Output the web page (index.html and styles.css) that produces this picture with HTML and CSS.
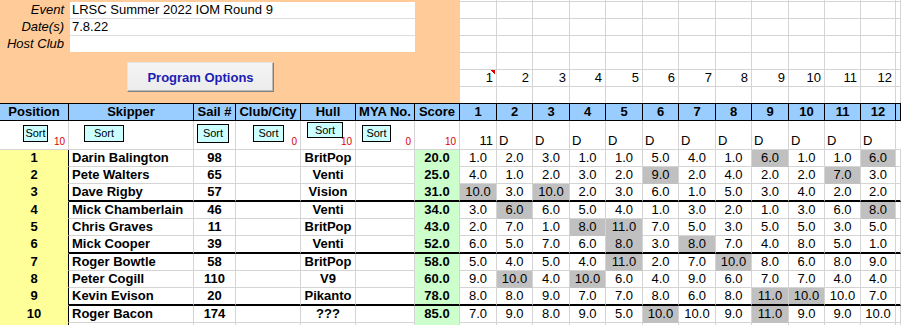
FILE: index.html
```html
<!DOCTYPE html>
<html>
<head>
<meta charset="utf-8">
<title>LRSC Summer 2022 IOM Round 9</title>
<link rel="stylesheet" href="styles.css">
</head>
<body>
<div class="sheet">
  <div class="top">
    <div class="panel">
      <div class="fields">
        <div class="lbl">Event</div><div class="val">LRSC Summer 2022 IOM Round 9</div>
        <div class="lbl">Date(s)</div><div class="val sep">7.8.22</div>
        <div class="lbl">Host Club</div><div class="val sep"></div>
      </div>
      <button class="prog">Program Options</button>
    </div>
    <div class="topgrid">
      <div></div><div></div><div></div><div></div><div></div><div></div><div></div><div></div><div></div><div></div><div></div><div></div><div></div>
      <div></div><div></div><div></div><div></div><div></div><div></div><div></div><div></div><div></div><div></div><div></div><div></div><div></div>
      <div></div><div></div><div></div><div></div><div></div><div></div><div></div><div></div><div></div><div></div><div></div><div></div><div></div>
      <div></div><div></div><div></div><div></div><div></div><div></div><div></div><div></div><div></div><div></div><div></div><div></div><div></div>
      <div></div><div></div><div></div><div></div><div></div><div></div><div></div><div></div><div></div><div></div><div></div><div></div><div></div>
      <div class="n note">1</div><div class="n">2</div><div class="n">3</div><div class="n">4</div><div class="n">5</div><div class="n">6</div><div class="n">7</div><div class="n">8</div><div class="n">9</div><div class="n">10</div><div class="n">11</div><div class="n">12</div><div></div>
      <div></div><div></div><div></div><div></div><div></div><div></div><div></div><div></div><div></div><div></div><div></div><div></div><div></div>
    </div>
  </div>

  <div class="row hdr">
    <div>Position</div><div>Skipper</div><div>Sail #</div><div>Club/City</div><div>Hull</div><div>MYA No.</div><div>Score</div>
    <div>1</div><div>2</div><div>3</div><div>4</div><div>5</div><div>6</div><div>7</div><div>8</div><div>9</div><div>10</div><div>11</div><div>12</div><div></div>
  </div>

  <div class="row srt">
    <div><span class="btn b-pos">Sort</span><span class="red">10</span></div>
    <div><span class="btn b-skip">Sort</span></div>
    <div><span class="btn b-sail">Sort</span></div>
    <div><span class="btn b-club">Sort</span><span class="red">0</span></div>
    <div><span class="btn b-hull">Sort</span><span class="red">10</span></div>
    <div><span class="btn b-mya">Sort</span><span class="red">0</span></div>
    <div><span class="red">10</span></div>
    <div>11</div>
    <div class="dl">D</div><div class="dl">D</div><div class="dl">D</div><div class="dl">D</div><div class="dl">D</div><div class="dl">D</div><div class="dl">D</div><div class="dl">D</div><div class="dl">D</div><div class="dl">D</div><div class="dl">D</div>
    <div></div>
  </div>

  <div class="row">
    <div class="p">1</div><div class="nm">Darin Balington</div><div class="b">98</div><div></div><div class="b">BritPop</div><div></div><div class="sc">20.0</div>
    <div>1.0</div><div>2.0</div><div>3.0</div><div>1.0</div><div>1.0</div><div>5.0</div><div>4.0</div><div>1.0</div><div class="g">6.0</div><div>1.0</div><div>1.0</div><div class="g">6.0</div><div></div>
  </div>
  <div class="row">
    <div class="p">2</div><div class="nm">Pete Walters</div><div class="b">65</div><div></div><div class="b">Venti</div><div></div><div class="sc">25.0</div>
    <div>4.0</div><div>1.0</div><div>2.0</div><div>3.0</div><div>2.0</div><div class="g">9.0</div><div>2.0</div><div>4.0</div><div>2.0</div><div>2.0</div><div class="g">7.0</div><div>3.0</div><div></div>
  </div>
  <div class="row thick">
    <div class="p">3</div><div class="nm">Dave Rigby</div><div class="b">57</div><div></div><div class="b">Vision</div><div></div><div class="sc">31.0</div>
    <div class="g">10.0</div><div>3.0</div><div class="g">10.0</div><div>2.0</div><div>3.0</div><div>6.0</div><div>1.0</div><div>5.0</div><div>3.0</div><div>4.0</div><div>2.0</div><div>2.0</div><div></div>
  </div>
  <div class="row">
    <div class="p">4</div><div class="nm">Mick Chamberlain</div><div class="b">46</div><div></div><div class="b">Venti</div><div></div><div class="sc">34.0</div>
    <div>3.0</div><div class="g">6.0</div><div>6.0</div><div>5.0</div><div>4.0</div><div>1.0</div><div>3.0</div><div>2.0</div><div>1.0</div><div>3.0</div><div>6.0</div><div class="g">8.0</div><div></div>
  </div>
  <div class="row">
    <div class="p">5</div><div class="nm">Chris Graves</div><div class="b">11</div><div></div><div class="b">BritPop</div><div></div><div class="sc">43.0</div>
    <div>2.0</div><div>7.0</div><div>1.0</div><div class="g">8.0</div><div class="g">11.0</div><div>7.0</div><div>5.0</div><div>3.0</div><div>5.0</div><div>5.0</div><div>3.0</div><div>5.0</div><div></div>
  </div>
  <div class="row thick">
    <div class="p">6</div><div class="nm">Mick Cooper</div><div class="b">39</div><div></div><div class="b">Venti</div><div></div><div class="sc">52.0</div>
    <div>6.0</div><div>5.0</div><div>7.0</div><div>6.0</div><div class="g">8.0</div><div>3.0</div><div class="g">8.0</div><div>7.0</div><div>4.0</div><div>8.0</div><div>5.0</div><div>1.0</div><div></div>
  </div>
  <div class="row">
    <div class="p">7</div><div class="nm">Roger Bowtle</div><div class="b">58</div><div></div><div class="b">BritPop</div><div></div><div class="sc">58.0</div>
    <div>5.0</div><div>4.0</div><div>5.0</div><div>4.0</div><div class="g">11.0</div><div>2.0</div><div>7.0</div><div class="g">10.0</div><div>8.0</div><div>6.0</div><div>8.0</div><div>9.0</div><div></div>
  </div>
  <div class="row">
    <div class="p">8</div><div class="nm">Peter Cogill</div><div class="b">110</div><div></div><div class="b">V9</div><div></div><div class="sc">60.0</div>
    <div>9.0</div><div class="g">10.0</div><div>4.0</div><div class="g">10.0</div><div>6.0</div><div>4.0</div><div>9.0</div><div>6.0</div><div>7.0</div><div>7.0</div><div>4.0</div><div>4.0</div><div></div>
  </div>
  <div class="row thick">
    <div class="p">9</div><div class="nm">Kevin Evison</div><div class="b">20</div><div></div><div class="b">Pikanto</div><div></div><div class="sc">78.0</div>
    <div>8.0</div><div>8.0</div><div>9.0</div><div>7.0</div><div>7.0</div><div>8.0</div><div>6.0</div><div>8.0</div><div class="g">11.0</div><div class="g">10.0</div><div>10.0</div><div>7.0</div><div></div>
  </div>
  <div class="row">
    <div class="p">10</div><div class="nm">Roger Bacon</div><div class="b">174</div><div></div><div class="b">???</div><div></div><div class="sc">85.0</div>
    <div>7.0</div><div>9.0</div><div>8.0</div><div>9.0</div><div>5.0</div><div class="g">10.0</div><div>10.0</div><div>9.0</div><div class="g">11.0</div><div>9.0</div><div>9.0</div><div>10.0</div><div></div>
  </div>
  <div class="row tail">
    <div class="p"></div><div></div><div></div><div></div><div></div><div></div><div class="sc"></div>
    <div></div><div></div><div></div><div></div><div></div><div></div><div></div><div></div><div></div><div></div><div></div><div></div><div></div>
  </div>
</div>
</body>
</html>
```

FILE: styles.css
```css
* {
  box-sizing: border-box;
  margin: 0;
  padding: 0;
}

:root {
  --race: 37px 36px 37px 36px 37px 36px 37px 36px 37px 36px 36px 35px 1fr;
  --cols: 69px 125px 42px 65px 55px 59px 45px var(--race);
  --grid: #d4d4d4;
}

body {
  width: 901px;
  height: 325px;
  overflow: hidden;
  background: #fff;
  color: #000;
  font-family: "Liberation Sans", Arial, sans-serif;
  font-size: 13px;
}

/* ---------- top area ---------- */
.top {
  display: flex;
  height: 103px;
}

.panel {
  flex: none;
  width: 460px;
  background: #ffcc99;
  padding-top: 2px;
}

.fields {
  display: grid;
  grid-template-columns: 70px 345px;
  grid-template-rows: 16px 17px 17px;
}

.lbl {
  font-style: italic;
  text-align: right;
  padding-right: 6px;
  line-height: 16px;
  white-space: nowrap;
}

.val {
  background: #fff;
  padding-left: 2px;
  line-height: 16px;
  white-space: nowrap;
}

.val.sep {
  border-top: 1px solid #dedede;
}

.fields .lbl:nth-child(n+3) {
  padding-top: 1px;
}

.prog {
  display: block;
  margin: 10px 0 0 127px;
  width: 147px;
  height: 30px;
  background: linear-gradient(#f4f4f4, #ececec);
  border: 1px solid;
  border-color: #e4e4e4 #808080 #808080 #e4e4e4;
  box-shadow: inset -1px -1px 0 #b8b8b8;
  color: #1c1cb4;
  font-family: "Liberation Sans", Arial, sans-serif;
  font-weight: bold;
  font-size: 13px;
  cursor: default;
}

.topgrid {
  flex: 1;
  display: grid;
  grid-template-columns: var(--race);
  grid-template-rows: 2px 17px 17px 17px 17px 17px 16px;
}

.topgrid > div {
  border-right: 1px solid var(--grid);
  border-bottom: 1px solid var(--grid);
}

.topgrid > div:nth-child(n+79) {
  border-bottom: none;
}

.topgrid > .n {
  text-align: right;
  padding-right: 3px;
  line-height: 16px;
}

.topgrid > .note {
  background: linear-gradient(to bottom left, #e00000 50%, transparent 50%) no-repeat right 1px top 0 / 5px 5px;
}

/* ---------- results grid ---------- */
.row {
  display: grid;
  grid-template-columns: var(--cols);
  height: 17px;
}

.row > div {
  border-right: 1px solid var(--grid);
  border-bottom: 1px solid var(--grid);
  line-height: 16px;
  text-align: center;
  white-space: nowrap;
  overflow: hidden;
}

.hdr {
  height: 18px;
  background: #99ccff;
  border-top: 1px solid #000;
}

.hdr > div {
  border-right-color: #000;
  border-bottom-color: #000;
  font-weight: bold;
}

.srt {
  height: 29px;
}

.srt > div {
  position: relative;
  overflow: visible;
  display: flex;
  align-items: flex-end;
  justify-content: flex-end;
  padding: 0 3px 2px 2px;
  line-height: 13px;
}

.srt > .dl {
  justify-content: flex-start;
}

.red {
  color: #e00000;
  font-size: 10px;
  line-height: 10px;
}

.btn {
  position: absolute;
  top: 4px;
  height: 17px;
  display: flex;
  align-items: center;
  justify-content: center;
  background: #ccffff;
  border: 1px solid #000;
  font-size: 11px;
  line-height: 11px;
}

.b-pos  { left: 23px; width: 25px; }
.b-skip { left: 15px; width: 40px; }
.b-sail { left: 3px;  width: 32px; top: 3px; height: 19px; }
.b-club { left: 17px; width: 31px; }
.b-hull { left: 6px;  width: 36px; top: 1px; height: 16px; }
.b-mya  { left: 6px;  width: 29px; }

.row > .p {
  background: #ffff99;
  border-right-color: #000;
  border-bottom-color: #ffff99;
  font-weight: bold;
}

.row > .nm {
  text-align: left;
  padding-left: 3px;
  font-weight: bold;
}

.row > .b {
  font-weight: bold;
}

.row > .sc {
  background: #ccffcc;
  border-bottom-color: #ccffcc;
  font-weight: bold;
}

.row > .g {
  background: #c0c0c0;
  border-bottom-color: #c0c0c0;
}

.thick {
  height: 18px;
}

.thick > div:not(.p) {
  border-bottom: 2px solid #000;
}

.tail {
  height: 2px;
}

.tail > div {
  border-bottom: none;
}
```
